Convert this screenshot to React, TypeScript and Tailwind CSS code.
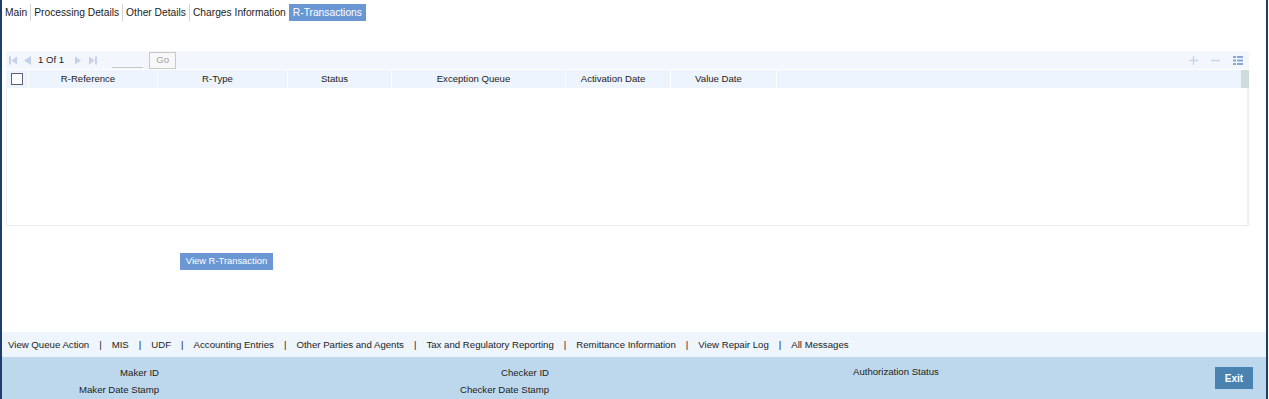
import React from 'react';

const tabs = ['Main', 'Processing Details', 'Other Details', 'Charges Information'];

const columns = [
  { label: 'R-Reference', w: 'w-[129px]' },
  { label: 'R-Type', w: 'w-[130px]' },
  { label: 'Status', w: 'w-[104px]' },
  { label: 'Exception Queue', w: 'w-[174px]' },
  { label: 'Activation Date', w: 'w-[105px]' },
  { label: 'Value Date', w: 'w-[106px]' },
];

const footerLinks = [
  'View Queue Action',
  'MIS',
  'UDF',
  'Accounting Entries',
  'Other Parties and Agents',
  'Tax and Regulatory Reporting',
  'Remittance Information',
  'View Repair Log',
  'All Messages',
];

const NavIcon = ({ kind }: { kind: 'first' | 'prev' | 'next' | 'last' }) => (
  <svg width="8" height="9" viewBox="0 0 8 9" className="shrink-0">
    {kind === 'first' && (
      <>
        <rect x="0" y="0.5" width="2" height="8" fill="#c3d2e8" />
        <path d="M8 0.5 L2.5 4.5 L8 8.5 Z" fill="#c3d2e8" />
      </>
    )}
    {kind === 'prev' && <path d="M7 0 L0 4.5 L7 9 Z" fill="#c3d2e8" />}
    {kind === 'next' && <path d="M1 0.5 L7 4.5 L1 8.5 Z" fill="#c3d2e8" />}
    {kind === 'last' && (
      <>
        <path d="M0 0.5 L5.5 4.5 L0 8.5 Z" fill="#c3d2e8" />
        <rect x="6" y="0.5" width="2" height="8" fill="#c3d2e8" />
      </>
    )}
  </svg>
);

export default function App() {
  return (
    <div className="w-[1268px] h-[399px] border-x-2 border-[#1f3d6b] flex flex-col font-['Liberation_Sans',Arial,sans-serif] text-[9.6px] text-[#222] bg-white">
      {/* tabs */}
      <div className="flex items-center mt-[4px] h-[17px] text-[10.25px]">
        {tabs.map((t, i) => (
          <div
            key={t}
            className={`px-[3px] leading-[17px] ${i > 0 ? 'border-l border-[#d4d4d4]' : ''}`}
          >
            {t}
          </div>
        ))}
        <div className="px-[4px] leading-[17px] bg-[#6a96d3] text-white">R-Transactions</div>
      </div>

      {/* grid */}
      <div className="ml-[4px] mt-[30px] w-[1243px] flex flex-col">
        <div className="h-[18px] bg-[#f3f7fd] flex items-center pl-[3px]">
          <NavIcon kind="first" />
          <div className="ml-[7px]"><NavIcon kind="prev" /></div>
          <span className="ml-[6px]">1 Of 1</span>
          <div className="ml-[10px]"><NavIcon kind="next" /></div>
          <div className="ml-[7px]"><NavIcon kind="last" /></div>
          <div className="ml-[15px] w-[31px] h-[16px] border-b border-[#c8c8c8]" />
          <div className="ml-[6px] w-[27px] h-[17px] border border-[#c8c8c8] bg-[#f8f8f8] text-[#a0a0a0] flex items-center justify-center">
            Go
          </div>
          <div className="ml-auto flex items-center gap-[13px] pr-[6px]">
            <svg width="9" height="9" viewBox="0 0 9 9">
              <path d="M4.5 0 V9 M0 4.5 H9" stroke="#c6d6ee" strokeWidth="1.4" />
            </svg>
            <svg width="9" height="9" viewBox="0 0 9 9">
              <path d="M0 4.5 H9" stroke="#c6d6ee" strokeWidth="1.4" />
            </svg>
            <svg width="10" height="9" viewBox="0 0 10 9">
              <rect x="0" y="0" width="3" height="2" fill="#88a6d6" />
              <rect x="4" y="0" width="6" height="2" fill="#88a6d6" />
              <rect x="0" y="3.5" width="3" height="2" fill="#88a6d6" />
              <rect x="4" y="3.5" width="6" height="2" fill="#88a6d6" />
              <rect x="0" y="7" width="3" height="2" fill="#88a6d6" />
              <rect x="4" y="7" width="6" height="2" fill="#88a6d6" />
            </svg>
          </div>
        </div>
        <div className="h-[18px] mt-[1px] bg-[#edf4fd] flex items-stretch">
          <div className="w-[22px] flex items-center justify-center">
            <div className="w-[12px] h-[12px] border border-[#5a6070] bg-white" />
          </div>
          {columns.map((c) => (
            <div
              key={c.label}
              className={`${c.w} border-l border-white flex items-center justify-center pr-[10px]`}
            >
              {c.label}
            </div>
          ))}
          <div className="flex-1 border-l border-white" />
          <div className="w-[8px] bg-[#cfdcdc]" />
        </div>
        <div className="h-[138px] border-x border-b border-[#ececf6] flex justify-end">
          <div className="w-[1px] bg-[#f0f0f6]" />
        </div>
      </div>

      {/* action button */}
      <div className="mt-[27px] pl-[178px]">
        <div className="inline-flex items-center justify-center w-[93px] h-[17px] bg-[#6b97d5] text-white text-[9.4px] whitespace-nowrap">
          View R-Transaction
        </div>
      </div>

      <div className="flex-1" />

      {/* footer links */}
      <div className="h-[25px] bg-[#eef5fd] flex items-center pl-[6px] pt-[2px] text-[9.65px] whitespace-nowrap">
        {footerLinks.map((l, i) => (
          <React.Fragment key={l}>
            {i > 0 && <span className="px-[10px]">|</span>}
            <span>{l}</span>
          </React.Fragment>
        ))}
      </div>

      {/* audit panel */}
      <div className="h-[42px] bg-[#bdd8ec] flex">
        <div className="w-[157px] pt-[7px] leading-[17px] text-right">
          <div>Maker ID</div>
          <div>Maker Date Stamp</div>
        </div>
        <div className="w-[390px] pt-[7px] leading-[17px] text-right">
          <div>Checker ID</div>
          <div>Checker Date Stamp</div>
        </div>
        <div className="ml-[304px] pt-[6px] leading-[17px]">Authorization Status</div>
        <div className="ml-auto mr-[13px] mt-[10px] w-[38px] h-[22px] bg-[#4a82b0] text-white font-bold text-[10px] flex items-center justify-center">
          Exit
        </div>
      </div>
    </div>
  );
}
